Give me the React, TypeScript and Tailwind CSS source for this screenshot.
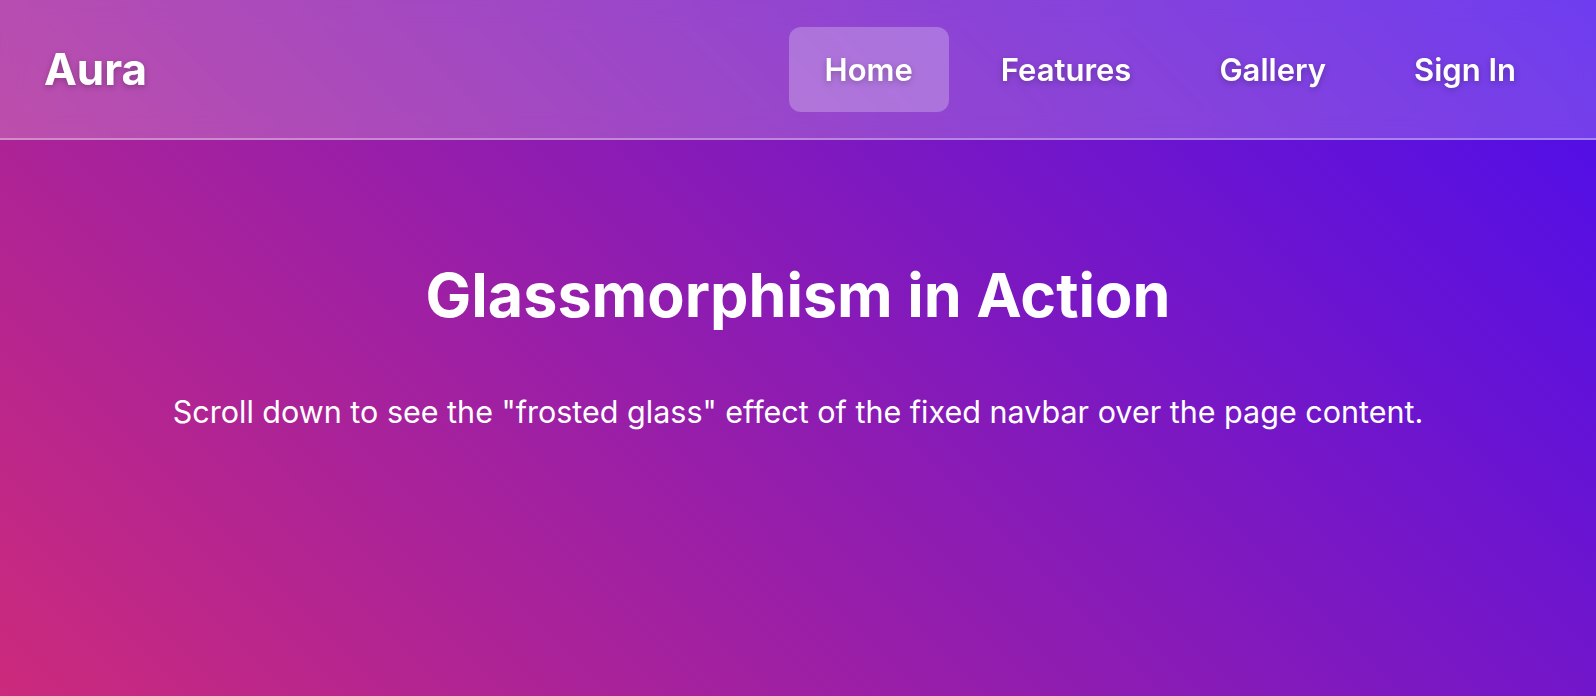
export default function App() {
  const links = ['Home', 'Features', 'Gallery', 'Sign In']

  return (
    <div
      className="min-h-screen bg-[linear-gradient(45deg,#cc2a7b,#4b0dec)] text-white"
      style={{ fontFamily: 'Inter, "Noto Sans", sans-serif' }}
    >
      <nav className="fixed top-0 left-0 right-0 h-[140px] flex items-center justify-between px-11 bg-white/20 backdrop-blur-md border-b-2 border-white/35">
        <span className="text-[44px] leading-none font-bold [text-shadow:0_2px_6px_rgba(0,0,0,0.25)]">
          Aura
        </span>
        <ul className="flex items-center gap-4">
          {links.map((l, i) => (
            <li key={l}>
              <a
                href="#"
                className={`block px-9 py-6 rounded-xl text-[31px] leading-[37px] font-semibold [text-shadow:0_2px_6px_rgba(0,0,0,0.25)] ${
                  i === 0 ? 'bg-white/25' : ''
                }`}
              >
                {l}
              </a>
            </li>
          ))}
        </ul>
      </nav>

      <main className="pt-[265px] flex flex-col items-center text-center">
        <h1 className="text-[61px] leading-none font-bold">Glassmorphism in Action</h1>
        <p className="mt-[68px] text-[30.5px] leading-9">
          Scroll down to see the "frosted glass" effect of the fixed navbar over the page content.
        </p>
      </main>
    </div>
  )
}
